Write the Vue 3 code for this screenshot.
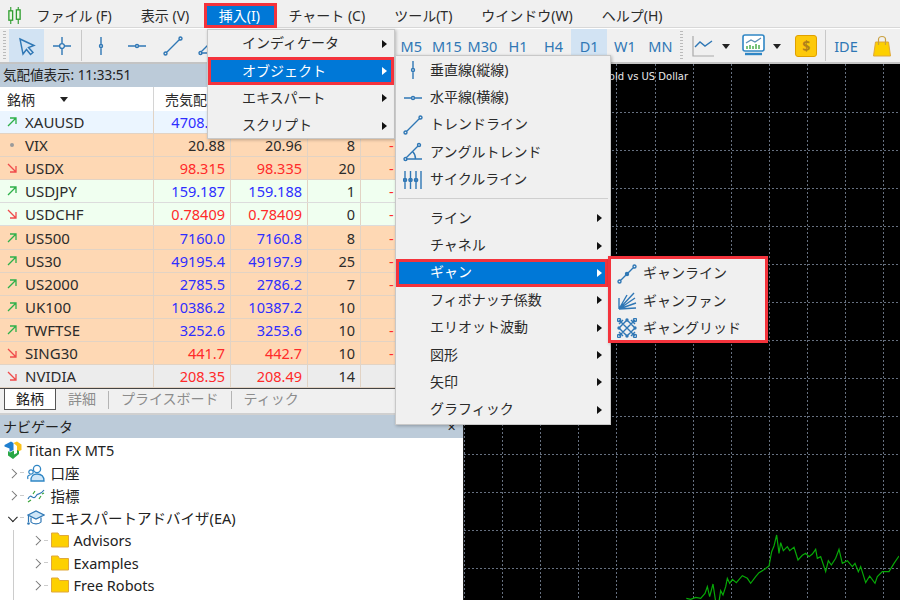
<template>
  <div class="app">
    <div class="menubar">
      <svg class="logo" viewBox="0 0 16 18">
        <path d="M4 0V18M12 0V18" stroke="#2f9e2f" stroke-width="1.2" />
        <rect x="2" y="4" width="4" height="10" fill="#eaf7e4" stroke="#2f9e2f" stroke-width="1.4" />
        <rect x="10" y="3" width="4" height="10" fill="#eaf7e4" stroke="#2f9e2f" stroke-width="1.4" />
      </svg>
      <span v-for="m in menus" :key="m" class="menu-item" :class="{ open: m === '挿入(I)' }">{{ m }}</span>
    </div>

    <div class="toolbar">
      <span class="grip"></span>
      <span v-for="(t, i) in tools.slice(0, 2)" :key="i" class="tb" :class="{ on: i === 0 }">
        <svg class="ic" viewBox="0 0 20 20"><path :d="t" /></svg>
      </span>
      <span class="tb-sep"></span>
      <span v-for="(t, i) in tools.slice(2)" :key="'l' + i" class="tb">
        <svg class="ic" viewBox="0 0 20 20"><path :d="t" /></svg>
      </span>
      <span class="tb-sep periods-sep"></span>
      <span v-for="p in periods" :key="p" class="tb period" :class="{ on: p === 'D1' }">{{ p }}</span>
      <span class="grip dots"></span>
      <svg class="tool-chart" viewBox="0 0 22 22">
        <path d="M1 1V21H22" fill="none" stroke="#aaa" stroke-width="1.2" />
        <path d="M3 12L8 7L13 11L20 6" fill="none" stroke="#2f77b5" stroke-width="1.4" />
      </svg>
      <span class="drop"></span>
      <svg class="tool-monitor" viewBox="0 0 23 23">
        <rect x="1" y="1" width="21" height="16" rx="2" fill="#fff" stroke="#2f86c5" stroke-width="1.6" />
        <path d="M3 20H20" stroke="#2f86c5" stroke-width="2.4" />
        <path d="M4 9L9 6L13 8L19 4" fill="none" stroke="#5a8fb5" stroke-width="1.3" />
        <path d="M5 15V12M8 15V11M11 15V12M14 15V10M17 15V11" stroke="#4fb04f" stroke-width="1.5" />
      </svg>
      <span class="drop"></span>
      <span class="dollar">$</span>
      <span class="tb-sep wide"></span>
      <span class="ide">IDE</span>
      <svg class="bag" viewBox="0 0 18 22">
        <path d="M2.5 7H15.5L17.5 21H0.5Z" fill="#fdd000" stroke="#e0a83a" />
        <path d="M5.5 10V4.5C5.5 0.5 12.5 0.5 12.5 4.5V10" fill="none" stroke="#c9a040" stroke-width="1.2" />
      </svg>
    </div>

    <div class="main">
      <div class="left">
        <div class="panel-head">気配値表示: 11:33:51</div>
        <div class="row head">
          <span class="c name">銘柄<i class="sort"></i></span>
          <span class="c col-head">売気配</span>
          <span class="c"></span>
          <span class="c"></span>
          <span class="c"></span>
        </div>
        <div v-for="s in symbols" :key="s.name" class="row" :class="s.bg">
          <span class="c name">
            <svg v-if="s.dir !== 'flat'" class="trend" viewBox="0 0 10 10" :class="s.dir">
              <path :d="s.dir === 'up' ? 'M1 9L9 1M3 1H9V7' : 'M1 1L9 9M3 9H9V3'" />
            </svg>
            <i v-else class="flat"></i>
            {{ s.name }}
          </span>
          <span class="c num" :class="s.color">{{ s.bid }}</span>
          <span class="c num" :class="s.color">{{ s.ask }}</span>
          <span class="c num">{{ s.spread }}</span>
          <span class="c dash">{{ s.dash ? '-' : '' }}</span>
        </div>
        <div class="tabs">
          <span class="tab active">銘柄</span>
          <span class="tab">詳細</span>
          <span class="tab-sep"></span>
          <span class="tab">プライスボード</span>
          <span class="tab-sep"></span>
          <span class="tab">ティック</span>
        </div>
        <div class="panel-head nav-head">ナビゲータ<span class="close">✕</span></div>
        <div class="tree">
          <div class="node root">
            <svg class="tree-ic" viewBox="0 0 18 18">
              <path d="M0.5 4L7 0.5L9.5 2V9L5.5 11V7.5L0.5 5.5Z" fill="#1f7fd0" />
              <path d="M9.5 2L13 0.5L17.5 3.5V9L13 11V5Z" fill="#fbc21a" />
              <path d="M4 10L6 11.5L10 9.5V13.5L13 12V9L15 10V13L9 18L4 14.5Z" fill="#28a745" />
            </svg>
            Titan FX MT5
          </div>
          <div class="node lv1">
            <i class="chev"></i><i class="tick"></i>
            <svg class="tree-ic" viewBox="0 0 18 18">
              <circle cx="10" cy="5" r="3.6" fill="none" stroke="#2f86c5" stroke-width="1.3" />
              <circle cx="4" cy="8" r="2.2" fill="none" stroke="#2f86c5" stroke-width="1.2" />
              <path d="M4 17C3.5 12 6.5 10 10 10C14 10 17 12 17 17Z" fill="#cfe6f7" stroke="#2f86c5" stroke-width="1.3" />
              <path d="M1 15C0 12 1.5 11 3.5 11" fill="none" stroke="#2f86c5" stroke-width="1.2" />
            </svg>
            口座
          </div>
          <div class="node lv1">
            <i class="chev"></i><i class="tick"></i>
            <svg class="tree-ic" viewBox="0 0 18 18">
              <path d="M1 13C4 6 6 15 9 10C11 6 13 10 17 4" fill="none" stroke="#2f77b5" stroke-width="1.2" />
              <path d="M1 16L4 14M6 8L8 5M12 13L14 10M15 8L17 7" stroke="#3aa53a" stroke-width="1.2" />
            </svg>
            指標
          </div>
          <div class="node lv1">
            <i class="chev down"></i><i class="tick"></i>
            <svg class="tree-ic" viewBox="0 0 18 18">
              <path d="M1 6L9 2L17 6L9 10Z" fill="#cfe6f7" stroke="#2f77b5" stroke-width="1.2" />
              <path d="M4 8.5V13C6 15.5 12 15.5 14 13V8.5" fill="none" stroke="#2f77b5" stroke-width="1.2" />
              <path d="M1.5 6.5V13" stroke="#2f77b5" stroke-width="1.2" />
              <circle cx="1.5" cy="14.5" r="1.3" fill="#2f77b5" />
            </svg>
            エキスパートアドバイザ(EA)
          </div>
          <div v-for="f in folders" :key="f" class="node lv2">
            <i class="chev"></i><i class="tick"></i>
            <svg class="tree-ic" viewBox="0 0 18 16">
              <path d="M0.5 1H7L8.5 3.5H17.5V15H0.5Z" fill="#fdd000" stroke="#e0a83a" />
            </svg>
            {{ f }}
          </div>
        </div>
        <i class="guide"></i>
      </div>

      <div class="chart">
        <svg class="grid">
          <line v-for="x in gridX" :key="'x' + x" :x1="x" :x2="x" y1="0" y2="536" />
          <line v-for="y in gridY" :key="'y' + y" x1="0" x2="436" :y1="y" :y2="y" />
        </svg>
        <span class="chart-title">old vs US Dollar</span>
        <svg class="price" viewBox="0 0 900 510">
          <polyline :points="price" />
        </svg>
      </div>
    </div>

    <!-- 挿入メニュー -->
    <div class="popup first">
      <div v-for="m in insertMenu" :key="m" class="pop-item" :class="{ picked: m === 'オブジェクト' }">
        <span class="label">{{ m }}</span><i class="arrow"></i>
      </div>
    </div>
    <div class="popup second">
      <div v-for="o in objectLines" :key="o.label" class="pop-item">
        <svg class="ic menu-ic" viewBox="0 0 20 20"><path :d="o.icon" /></svg>
        <span class="label">{{ o.label }}</span>
      </div>
      <div class="pop-sep"></div>
      <div v-for="m in objectMenu" :key="m" class="pop-item" :class="{ picked: m === 'ギャン' }">
        <span class="label">{{ m }}</span><i class="arrow"></i>
      </div>
    </div>
    <div class="popup third">
      <div v-for="g in gannMenu" :key="g.label" class="pop-item">
        <svg class="ic menu-ic" viewBox="0 0 20 20"><path :d="g.icon" /></svg>
        <span class="label">{{ g.label }}</span>
      </div>
    </div>
  </div>
</template>

<script setup>
const dot = (x, y, r = 1.2) =>
  `M${x - r} ${y}a${r} ${r} 0 1 0 ${r * 2} 0a${r} ${r} 0 1 0 ${-r * 2} 0`

const vline = `M10 1V8.5M10 11.5V19${dot(10, 10, 1.5)}`
const hline = `M1 10H8.5M11.5 10H19${dot(10, 10, 1.5)}`
const trend = `M3.5 16.5L16.5 3.5${dot(2.5, 17.5, 1.5)}${dot(17.5, 2.5, 1.5)}`
const angle = `M3 16L15 4M3 17H19M10 10C12 12 12.5 14 12.5 17${dot(2.5, 17, 1.5)}${dot(16, 3, 1.5)}`
const cycle = `M2 1V19M7.5 1V19M13 1V19M18 1V19${dot(2, 10, 1.6)}${dot(7.5, 10, 1.6)}${dot(13, 10, 1.6)}`
const gannLine = `M3.5 16.5L16.5 3.5${dot(2.5, 17.5, 1.5)}${dot(17.5, 2.5, 1.5)}${dot(10, 10, 1.5)}`
const gannFan = `M2 18L17 2M2 18L10 4M2 18L18 7M2 18L19 12M2 18L19 17M2 18V7`
const gannGrid =
  `M2 2L18 18M18 2L2 18M2 10L10 2L18 10L10 18ZM6 2L2 6M14 2L18 6M2 14L6 18M18 14L14 18` +
  dot(2, 2, 1.6) + dot(18, 2, 1.6) + dot(2, 18, 1.6) + dot(18, 18, 1.6) + dot(10, 2, 1) + dot(10, 18, 1) + dot(2, 10, 1) + dot(18, 10, 1)

const menus = ['ファイル (F)', '表示 (V)', '挿入(I)', 'チャート (C)', 'ツール(T)', 'ウインドウ(W)', 'ヘルプ(H)']

const tools = [
  'M4 3L18 9.5L12.5 11.5L17 16.5L14.5 18.5L10.5 13.5L7 18Z',
  `M10 1V7.5M10 12.5V19M1 10H7.5M12.5 10H19${dot(10, 10, 2.4)}`,
  vline,
  hline,
  trend,
  angle,
  cycle,
  gannLine,
  gannFan,
]

const periods = ['M1', 'M5', 'M15', 'M30', 'H1', 'H4', 'D1', 'W1', 'MN']

const symbols = [
  { name: 'XAUUSD', dir: 'up', bg: 'blue-row', color: 'blue', bid: '4708.12', ask: '', spread: '' },
  { name: 'VIX', dir: 'flat', bg: 'peach', color: '', bid: '20.88', ask: '20.96', spread: '8', dash: true },
  { name: 'USDX', dir: 'down', bg: 'peach', color: 'red', bid: '98.315', ask: '98.335', spread: '20', dash: true },
  { name: 'USDJPY', dir: 'up', bg: 'green', color: 'blue', bid: '159.187', ask: '159.188', spread: '1', dash: true },
  { name: 'USDCHF', dir: 'down', bg: 'green', color: 'red', bid: '0.78409', ask: '0.78409', spread: '0', dash: true },
  { name: 'US500', dir: 'up', bg: 'peach', color: 'blue', bid: '7160.0', ask: '7160.8', spread: '8', dash: true },
  { name: 'US30', dir: 'up', bg: 'peach', color: 'blue', bid: '49195.4', ask: '49197.9', spread: '25', dash: true },
  { name: 'US2000', dir: 'up', bg: 'peach', color: 'blue', bid: '2785.5', ask: '2786.2', spread: '7', dash: true },
  { name: 'UK100', dir: 'up', bg: 'peach', color: 'blue', bid: '10386.2', ask: '10387.2', spread: '10' },
  { name: 'TWFTSE', dir: 'up', bg: 'peach', color: 'blue', bid: '3252.6', ask: '3253.6', spread: '10', dash: true },
  { name: 'SING30', dir: 'down', bg: 'peach', color: 'red', bid: '441.7', ask: '442.7', spread: '10', dash: true },
  { name: 'NVIDIA', dir: 'down', bg: 'gray', color: 'red', bid: '208.35', ask: '208.49', spread: '14' },
]

const folders = ['Advisors', 'Examples', 'Free Robots']

const insertMenu = ['インディケータ', 'オブジェクト', 'エキスパート', 'スクリプト']
const objectLines = [
  { label: '垂直線(縦線)', icon: vline },
  { label: '水平線(横線)', icon: hline },
  { label: 'トレンドライン', icon: trend },
  { label: 'アングルトレンド', icon: angle },
  { label: 'サイクルライン', icon: cycle },
]
const objectMenu = ['ライン', 'チャネル', 'ギャン', 'フィボナッチ係数', 'エリオット波動', '図形', '矢印', 'グラフィック']
const gannMenu = [
  { label: 'ギャンライン', icon: gannLine },
  { label: 'ギャンファン', icon: gannFan },
  { label: 'ギャングリッド', icon: gannGrid },
]

const gridX = Array.from({ length: 12 }, (_, i) => 0.5 + Math.round(i * 38.1))
const gridY = Array.from({ length: 13 }, (_, i) => 48.5 + i * 38)

const price =
  '262,505 275,508 290,502 305,505 318,490 325,470 332,500 342,462 350,515 360,515 365,482 372,495 380,470 385,445 ' +
  '392,460 400,448 412,458 430,437 445,445 455,460 470,440 480,428 497,418 510,408 518,365 525,348 533,315 540,370 ' +
  '545,338 553,362 565,350 572,362 585,352 597,390 610,376 620,370 630,380 640,372 650,358 655,385 665,380 680,425 ' +
  '688,392 697,405 710,385 720,358 730,400 745,392 760,410 768,400 778,425 785,410 800,458 812,438 828,460 835,440 ' +
  '850,425 870,425 885,400 900,378'
</script>

<style scoped>
.app {
  position: relative;
  width: 900px;
  height: 600px;
  overflow: hidden;
  background: #f0f0f0;
  color: #2b2b2b;
  font-family: "Noto Sans", "Noto Sans CJK JP", sans-serif;
  font-size: 14px;
}

.menubar {
  display: flex;
  align-items: center;
  height: 28px;
  padding-top: 4px;
  box-sizing: border-box;
  border-bottom: 1px solid #d8d8d8;
}
.logo {
  width: 15px;
  height: 17px;
  margin-left: 7px;
  flex: none;
}
.menu-item {
  padding: 0 14.5px;
  height: 19px;
  line-height: 19px;
  white-space: nowrap;
}
.menu-item.open {
  background: #0078d7;
  color: #fff;
  outline: 3px solid #f4333c;
  margin-left: 3px;
  padding: 0 14px 0 12px;
}

.toolbar {
  display: flex;
  align-items: center;
  height: 36px;
  box-sizing: border-box;
  border-top: 1px solid #fff;
  border-bottom: 2px solid #c4c4c4;
}
.grip {
  width: 3px;
  height: 30px;
  background: repeating-linear-gradient(to bottom, #bbb 0 1px, transparent 1px 3px);
  margin-left: 3px;
  margin-right: 2.5px;
  flex: none;
}
.grip.dots {
  margin-left: 2px;
  margin-right: 9px;
}
.tb {
  display: flex;
  align-items: center;
  justify-content: center;
  width: 35.6px;
  height: 33px;
  flex: none;
}
.tb.on {
  background: #d2e3f3;
}
.period {
  color: #2f77b5;
  font-size: 14.5px;
}
.tb-sep {
  width: 1px;
  height: 31px;
  background: #c8c8c8;
  margin: 0 1.5px;
  flex: none;
}
.periods-sep {
  margin: 0 12px;
}
.ic {
  width: 20px;
  height: 20px;
  fill: none;
  stroke: #2f77b5;
  stroke-width: 1.4;
}
.tool-chart {
  width: 22px;
  height: 22px;
  flex: none;
}
.drop {
  width: 0;
  height: 0;
  border-left: 4.5px solid transparent;
  border-right: 4.5px solid transparent;
  border-top: 5px solid #222;
  margin: 2px 12px 0 8px;
  flex: none;
}
.tool-monitor {
  width: 23px;
  height: 23px;
  flex: none;
}
.dollar {
  width: 20px;
  height: 20px;
  flex: none;
  line-height: 20px;
  text-align: center;
  background: #fdc90b;
  border: 1px solid #e0a000;
  border-radius: 3px;
  color: #b0801a;
  font-weight: 700;
  margin-left: 2px;
}
.tb-sep.wide {
  margin: 0 8px;
}
.ide {
  color: #2f77b5;
  font-size: 14.5px;
  margin: 0 14px 0 0;
}
.bag {
  width: 20px;
  height: 22px;
  flex: none;
}

.main {
  display: flex;
  height: 536px;
}
.left {
  position: relative;
  width: 463px;
  flex: none;
  background: #fff;
  overflow: hidden;
}
.panel-head {
  height: 23px;
  line-height: 23px;
  padding-left: 3px;
  background: #bccbd9;
  font-size: 13.5px;
  color: #222;
}
.row {
  display: grid;
  grid-template-columns: 154px 77px 77px 53px 1fr;
  height: 23.1px;
  box-sizing: border-box;
  border-bottom: 1px solid #e2d3c4;
  font-size: 14.5px;
}
.row.head {
  background: #fff;
  border-bottom: 0;
  height: 24px;
  font-size: 14px;
}
.c {
  display: flex;
  align-items: center;
  border-right: 1px solid #e2d3c4;
  white-space: nowrap;
  overflow: hidden;
}
.row.head .c {
  border-right: 1px solid #d4d4d4;
}
.col-head {
  padding-left: 11px;
}
.name {
  padding-left: 7px;
  gap: 8px;
  font-size: 15px;
}
.row.head .name {
  font-size: 14px;
}
.sort {
  width: 0;
  height: 0;
  border-left: 4.5px solid transparent;
  border-right: 4.5px solid transparent;
  border-top: 5px solid #222;
  margin-left: 17px;
}
.trend {
  width: 10px;
  height: 10px;
  fill: none;
  stroke-width: 1.3;
  flex: none;
}
.trend.up {
  stroke: #2eb04a;
}
.trend.down {
  stroke: #f04a4a;
}
.flat {
  width: 4px;
  height: 4px;
  border-radius: 50%;
  background: #9a9a9a;
  margin: 0 3px;
  flex: none;
}
.num {
  justify-content: flex-end;
  padding-right: 5px;
}
.dash {
  color: #ff2a2a;
  padding-left: 28px;
}
.peach {
  background: #fed8b4;
}
.green {
  background: #f0fff0;
  border-bottom-color: #dcdcdc;
}
.blue-row {
  background: #ebf5ff;
}
.gray {
  background: #ececec;
}
.blue {
  color: #2e2eff;
}
.red {
  color: #ff2a2a;
}

.tabs {
  display: flex;
  align-items: flex-start;
  height: 27px;
  box-sizing: border-box;
  background: #f0f0f0;
  border-top: 1px solid #444;
  border-bottom: 2px solid #d0d0d0;
  padding-left: 4px;
  color: #8c8c8c;
}
.tab {
  height: 20px;
  line-height: 20px;
  padding: 0 12px;
  white-space: nowrap;
}
.tab.active {
  background: #fff;
  color: #222;
  border: 1px solid #555;
  border-top: 0;
  padding: 0 11px;
}
.tab-sep {
  width: 1px;
  height: 18px;
  margin-top: 2px;
  background: #b4b4b4;
}
.nav-head {
  position: relative;
  font-size: 14px;
}
.close {
  position: absolute;
  right: 7px;
  top: 0;
  font-size: 11px;
  color: #222;
}
.tree {
  padding-top: 1px;
  background: #fff;
  color: #222;
}
.node {
  display: flex;
  align-items: center;
  height: 22.5px;
  font-size: 14.5px;
  white-space: nowrap;
}
.root {
  padding-left: 4px;
}
.lv1 {
  padding-left: 9px;
}
.lv2 {
  padding-left: 33px;
}
.tree-ic {
  width: 18px;
  height: 18px;
  margin-right: 5px;
  flex: none;
}
.lv1 .tree-ic {
  margin-left: 1px;
  margin-right: 6px;
}
.lv2 .tree-ic {
  height: 16px;
  margin-left: 1px;
}
.chev {
  width: 5.5px;
  height: 5.5px;
  border-top: 1.6px solid #777;
  border-right: 1.6px solid #777;
  transform: rotate(45deg);
  margin-right: 4px;
  flex: none;
}
.chev.down {
  border-color: #222;
  transform: translate(1px, -1px) rotate(135deg);
}
.tick {
  width: 4px;
  height: 1px;
  background: #ccc;
  margin-right: 2px;
  flex: none;
}
.guide {
  position: absolute;
  left: 13px;
  top: 466px;
  bottom: 0;
  width: 1px;
  background: #ccc;
}

.chart {
  position: relative;
  flex: 1;
  background: #000;
  border-left: 1px solid #222;
  overflow: hidden;
}
.grid {
  position: absolute;
  left: 0;
  top: 0;
  width: 436px;
  height: 536px;
}
.grid line {
  stroke: #667080;
  stroke-width: 1;
  stroke-dasharray: 2 2;
}
.chart-title {
  position: absolute;
  right: 212px;
  top: 7px;
  color: #e8e8e8;
  font-size: 10px;
  font-family: "DejaVu Sans", sans-serif;
  white-space: nowrap;
}
.price {
  position: absolute;
  left: 135px;
  top: 366px;
  width: 300px;
  height: 170px;
  fill: none;
  stroke: #07a807;
  stroke-width: 3.6;
  overflow: hidden;
}

.popup {
  position: absolute;
  background: #f0f0f0;
  border: 1px solid #c8c8c8;
  box-sizing: border-box;
  box-shadow: 1px 1px 3px rgba(0, 0, 0, 0.25);
}
.pop-item {
  position: relative;
  display: flex;
  align-items: center;
  height: 27.4px;
  box-sizing: border-box;
  white-space: nowrap;
}
.label {
  flex: 1;
  margin-bottom: 3px;
}
.arrow {
  width: 0;
  height: 0;
  border-top: 4.5px solid transparent;
  border-bottom: 4.5px solid transparent;
  border-left: 5px solid #111;
}
.pop-item.picked {
  background: #0078d7;
  color: #fff;
  z-index: 1;
  outline: 3px solid #f4333c;
  outline-offset: -3px;
}
.pop-item.picked .arrow {
  border-left-color: #fff;
}
.first {
  left: 207px;
  top: 29px;
  width: 188px;
  height: 110px;
}
.first .pop-item {
  padding: 0 7px 0 34px;
}
.second {
  left: 395px;
  top: 55px;
  width: 216px;
  height: 370px;
  padding-top: 0.5px;
  z-index: 1;
}
.second .pop-item {
  padding: 0 8px 0 34px;
}
.second .menu-ic {
  position: absolute;
  left: 7px;
  top: 3.7px;
}
.second .pop-item.picked {
  margin-right: 2px;
  padding-right: 6px;
}
.pop-sep {
  height: 1px;
  margin: 5px 2px;
  background: #cfcfcf;
}
.third {
  left: 608px;
  top: 256px;
  width: 160px;
  height: 87px;
  padding-top: 1px;
  border: 3px solid #f4333c;
  z-index: 2;
}
.third .pop-item {
  padding-left: 32px;
}
.third .menu-ic {
  position: absolute;
  left: 6px;
  top: 3.7px;
}
</style>
